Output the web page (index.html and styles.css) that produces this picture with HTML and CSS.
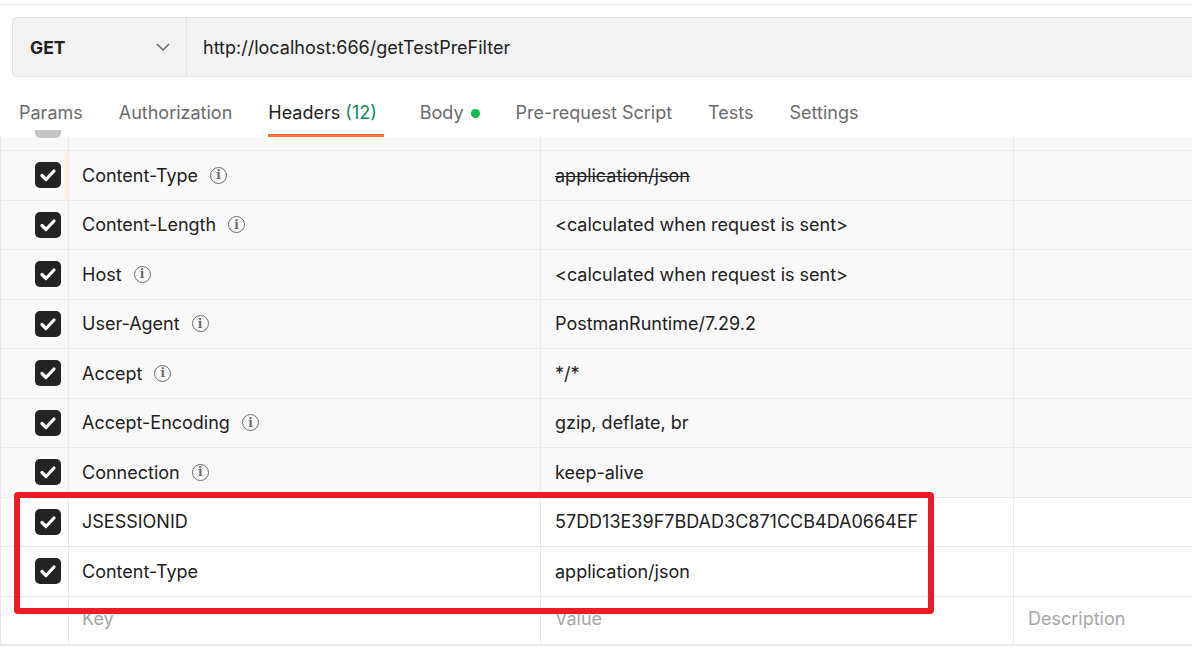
FILE: index.html
```html
<!DOCTYPE html>
<html>
<head>
<meta charset="utf-8">
<link rel="stylesheet" href="styles.css">
</head>
<body>
<div class="app">
  <div class="topline"></div>
  <div class="urlbar">
    <div class="method">
      <span class="method-name">GET</span>
      <svg class="chev" width="14" height="8" viewBox="0 0 14 8"><path d="M1 1l6 6 6-6" fill="none" stroke="#6b6b6b" stroke-width="1.5"/></svg>
    </div>
    <div class="url">http://localhost:666/getTestPreFilter</div>
  </div>
  <div class="tabs">
    <div class="tab">Params</div>
    <div class="tab">Authorization</div>
    <div class="tab active">Headers <span class="count">(12)</span></div>
    <div class="tab">Body <span class="dot"></span></div>
    <div class="tab">Pre-request Script</div>
    <div class="tab">Tests</div>
    <div class="tab">Settings</div>
  </div>
  <div class="table">
    <div class="row partial auto">
      <div class="c-check"><span class="stub"></span></div>
      <div class="c-key"></div>
      <div class="c-val"></div>
      <div class="c-desc"></div>
    </div>
    <div class="row auto">
      <div class="c-check mod"><span class="cb"><svg viewBox="0 0 26 26"><path d="M7 13.5l4 4 8-8.5" fill="none" stroke="#fff" stroke-width="3.2" stroke-linecap="round" stroke-linejoin="round"/></svg></span></div>
      <div class="c-key">Content-Type <span class="info">i</span></div>
      <div class="c-val"><s>application/json</s></div>
      <div class="c-desc"></div>
    </div>
    <div class="row auto">
      <div class="c-check"><span class="cb"><svg viewBox="0 0 26 26"><path d="M7 13.5l4 4 8-8.5" fill="none" stroke="#fff" stroke-width="3.2" stroke-linecap="round" stroke-linejoin="round"/></svg></span></div>
      <div class="c-key">Content-Length <span class="info">i</span></div>
      <div class="c-val">&lt;calculated when request is sent&gt;</div>
      <div class="c-desc"></div>
    </div>
    <div class="row auto">
      <div class="c-check"><span class="cb"><svg viewBox="0 0 26 26"><path d="M7 13.5l4 4 8-8.5" fill="none" stroke="#fff" stroke-width="3.2" stroke-linecap="round" stroke-linejoin="round"/></svg></span></div>
      <div class="c-key">Host <span class="info">i</span></div>
      <div class="c-val">&lt;calculated when request is sent&gt;</div>
      <div class="c-desc"></div>
    </div>
    <div class="row auto">
      <div class="c-check"><span class="cb"><svg viewBox="0 0 26 26"><path d="M7 13.5l4 4 8-8.5" fill="none" stroke="#fff" stroke-width="3.2" stroke-linecap="round" stroke-linejoin="round"/></svg></span></div>
      <div class="c-key">User-Agent <span class="info">i</span></div>
      <div class="c-val">PostmanRuntime/7.29.2</div>
      <div class="c-desc"></div>
    </div>
    <div class="row auto">
      <div class="c-check"><span class="cb"><svg viewBox="0 0 26 26"><path d="M7 13.5l4 4 8-8.5" fill="none" stroke="#fff" stroke-width="3.2" stroke-linecap="round" stroke-linejoin="round"/></svg></span></div>
      <div class="c-key">Accept <span class="info">i</span></div>
      <div class="c-val">*/*</div>
      <div class="c-desc"></div>
    </div>
    <div class="row auto">
      <div class="c-check"><span class="cb"><svg viewBox="0 0 26 26"><path d="M7 13.5l4 4 8-8.5" fill="none" stroke="#fff" stroke-width="3.2" stroke-linecap="round" stroke-linejoin="round"/></svg></span></div>
      <div class="c-key">Accept-Encoding <span class="info">i</span></div>
      <div class="c-val">gzip, deflate, br</div>
      <div class="c-desc"></div>
    </div>
    <div class="row auto">
      <div class="c-check"><span class="cb"><svg viewBox="0 0 26 26"><path d="M7 13.5l4 4 8-8.5" fill="none" stroke="#fff" stroke-width="3.2" stroke-linecap="round" stroke-linejoin="round"/></svg></span></div>
      <div class="c-key">Connection <span class="info">i</span></div>
      <div class="c-val">keep-alive</div>
      <div class="c-desc"></div>
    </div>
    <div class="row">
      <div class="c-check"><span class="cb"><svg viewBox="0 0 26 26"><path d="M7 13.5l4 4 8-8.5" fill="none" stroke="#fff" stroke-width="3.2" stroke-linecap="round" stroke-linejoin="round"/></svg></span></div>
      <div class="c-key">JSESSIONID</div>
      <div class="c-val">57DD13E39F7BDAD3C871CCB4DA0664EF</div>
      <div class="c-desc"></div>
    </div>
    <div class="row">
      <div class="c-check"><span class="cb"><svg viewBox="0 0 26 26"><path d="M7 13.5l4 4 8-8.5" fill="none" stroke="#fff" stroke-width="3.2" stroke-linecap="round" stroke-linejoin="round"/></svg></span></div>
      <div class="c-key">Content-Type</div>
      <div class="c-val">application/json</div>
      <div class="c-desc"></div>
    </div>
    <div class="row last">
      <div class="c-check"></div>
      <div class="c-key ph">Key</div>
      <div class="c-val ph">Value</div>
      <div class="c-desc ph">Description</div>
    </div>
  </div>
  <div class="highlight"></div>
</div>
</body>
</html>
```
FILE: styles.css
```css
html, body {
  margin: 0;
  padding: 0;
  background: #fff;
}
body {
  font-family: Inter, "Noto Sans", sans-serif;
  color: #212121;
  overflow: hidden;
}
.app {
  position: relative;
  width: 1192px;
  height: 650px;
  overflow: hidden;
}
.topline {
  height: 4px;
  border-bottom: 1px solid #e8e8e8;
}
.urlbar {
  display: flex;
  margin: 12px 0 0 12px;
  width: 1200px;
  height: 58px;
  background: #f2f2f2;
  border: 1px solid #e3e3e3;
  border-radius: 4px;
}
.method {
  width: 140px;
  padding-left: 17px;
  padding-right: 16px;
  display: flex;
  align-items: center;
  justify-content: space-between;
  border-right: 1px solid #e3e3e3;
}
.method-name {
  font-weight: 700;
  font-size: 17.5px;
  color: #212121;
}
.chev { display: block; }
.url {
  display: flex;
  align-items: center;
  padding-left: 16px;
  font-size: 18px;
  color: #212121;
}
.tabs {
  display: flex;
  margin-top: 20px;
  padding-left: 19px;
  gap: 36px;
  height: 40px;
}
.tab {
  font-size: 18px;
  color: #6b6b6b;
  height: 37px;
  line-height: 32px;
  border-bottom: 3px solid transparent;
  display: flex;
  align-items: flex-start;
  white-space: pre;
}
.tab.active {
  color: #212121;
  border-bottom-color: #ff6c37;
  padding-right: 7px;
}
.count { color: #0b8b57; }
.dot {
  display: inline-block;
  width: 9px;
  height: 9px;
  border-radius: 50%;
  background: #0cbb52;
  margin-top: 12px;
  margin-left: 2px;
}
.table {
  border-left: 1px solid #e6e6e6;
}
.row {
  display: grid;
  grid-template-columns: 68px 472px 473px 1fr;
  height: 48.5px;
  border-bottom: 1px solid #ebebeb;
  background: #fff;
  font-size: 18px;
}
.row.auto { background: #f9f9f9; }
.row.partial { height: 13px; }
.row.last { height: 47.5px; border-bottom: 2px solid #ebebeb; }
.row > div {
  display: flex;
  align-items: center;
  border-right: 1px solid #ebebeb;
}
.row > div.c-desc { border-right: none; }
.row.last > div { padding-bottom: 3px; }
.c-check {
  padding-left: 34px;
}
.c-check.mod {
  box-shadow: inset -3px 0 0 #fdf5dc;
}
.partial .c-check { align-items: flex-start; }
.stub {
  display: block;
  width: 26px;
  height: 8px;
  margin-top: -7px;
  background: #c4c4c4;
  border-radius: 0 0 5px 5px;
}
.cb {
  display: block;
  width: 26px;
  height: 26px;
  background: #232323;
  border-radius: 5px;
}
.cb svg { display: block; width: 26px; height: 26px; }
.c-key { padding-left: 13px; }
.c-val { padding-left: 14px; }
.c-desc { padding-left: 14px; }
.ph { color: #a6a6a6; }
.info {
  display: inline-flex;
  align-items: center;
  justify-content: center;
  width: 15px;
  height: 15px;
  border: 1.5px solid #6b6b6b;
  border-radius: 50%;
  margin-left: 12px;
  font-family: "DejaVu Serif", serif;
  font-size: 12px;
  font-weight: 700;
  color: #6b6b6b;
  line-height: 1;
}
s { text-decoration-thickness: 1px; }
.highlight {
  position: absolute;
  left: 14px;
  top: 492px;
  width: 908px;
  height: 110px;
  border: 6px solid #ea1d27;
  border-radius: 4px;
}
```
